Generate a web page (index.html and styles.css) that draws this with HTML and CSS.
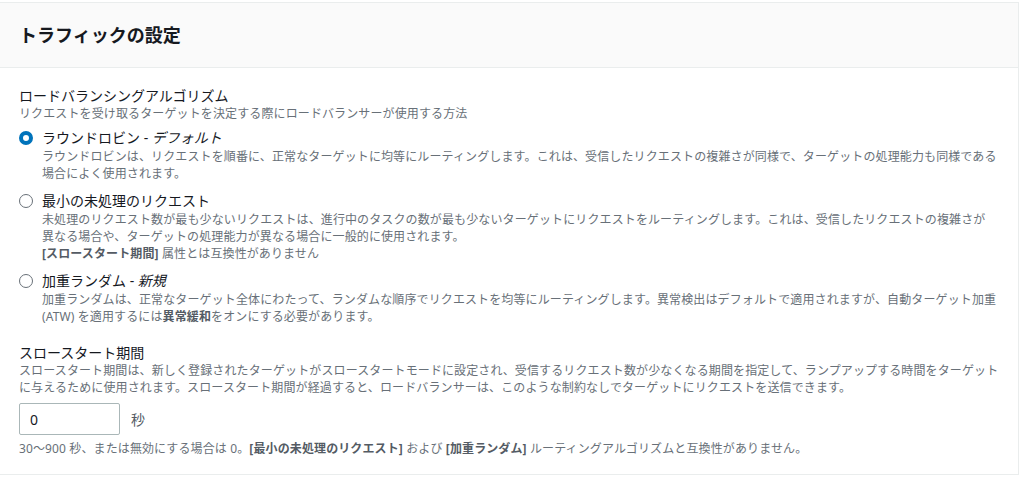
FILE: index.html
```html
<!DOCTYPE html>
<html lang="ja">
<head>
<meta charset="utf-8">
<title>トラフィックの設定</title>
<link rel="stylesheet" href="styles.css">
</head>
<body>
<div class="card">
  <div class="card-header">
    <h2 class="card-title">トラフィックの設定</h2>
  </div>
  <div class="card-body">
    <div class="field">
      <div class="field-label">ロードバランシングアルゴリズム</div>
      <div class="field-desc">リクエストを受け取るターゲットを決定する際にロードバランサーが使用する方法</div>
      <div class="radio-group">
        <div class="radio-option">
          <div class="radio-row">
            <span class="radio checked"></span>
            <span class="radio-label">ラウンドロビン - <em>デフォルト</em></span>
          </div>
          <div class="radio-desc">ラウンドロビンは、リクエストを順番に、正常なターゲットに均等にルーティングします。これは、受信したリクエストの複雑さが同様で、ターゲットの処理能力も同様である<br>場合によく使用されます。</div>
        </div>
        <div class="radio-option">
          <div class="radio-row">
            <span class="radio"></span>
            <span class="radio-label">最小の未処理のリクエスト</span>
          </div>
          <div class="radio-desc">未処理のリクエスト数が最も少ないリクエストは、進行中のタスクの数が最も少ないターゲットにリクエストをルーティングします。これは、受信したリクエストの複雑さが<br>異なる場合や、ターゲットの処理能力が異なる場合に一般的に使用されます。<br><strong>[スロースタート期間]</strong> 属性とは互換性がありません</div>
        </div>
        <div class="radio-option">
          <div class="radio-row">
            <span class="radio"></span>
            <span class="radio-label">加重ランダム - <em>新規</em></span>
          </div>
          <div class="radio-desc">加重ランダムは、正常なターゲット全体にわたって、ランダムな順序でリクエストを均等にルーティングします。異常検出はデフォルトで適用されますが、自動ターゲット加重<br>(ATW) を適用するには<strong>異常緩和</strong>をオンにする必要があります。</div>
        </div>
      </div>
    </div>
    <div class="field field-slow">
      <div class="field-label">スロースタート期間</div>
      <div class="field-desc">スロースタート期間は、新しく登録されたターゲットがスロースタートモードに設定され、受信するリクエスト数が少なくなる期間を指定して、ランプアップする時間をターゲット<br>に与えるために使用されます。スロースタート期間が経過すると、ロードバランサーは、このような制約なしでターゲットにリクエストを送信できます。</div>
      <div class="input-row">
        <div class="text-input">0</div>
        <span class="unit">秒</span>
      </div>
      <div class="field-hint">30〜900 秒、または無効にする場合は 0。<strong>[最小の未処理のリクエスト]</strong> および <strong>[加重ランダム]</strong> ルーティングアルゴリズムと互換性がありません。</div>
    </div>
  </div>
</div>
</body>
</html>
```

FILE: styles.css
```css
* { box-sizing: border-box; }
html, body { margin: 0; padding: 0; background: #ffffff; }
body {
  font-family: "Noto Sans", "Noto Sans CJK JP", sans-serif;
  color: #16191f;
}
.card {
  margin: 2px 0 0 -1px;
  width: 1020px;
  border: 1px solid #eaeded;
  background: #ffffff;
}
.card-header {
  height: 65px;
  background: #fafafa;
  border-bottom: 1px solid #eaeded;
  display: flex;
  align-items: center;
  padding-left: 19px;
}
.card-title {
  margin: 0;
  font-size: 18px;
  font-weight: 700;
  line-height: 22px;
  color: #16191f;
}
.card-body {
  padding: 19px 19px 17px 19px;
}
.field-label {
  font-size: 14px;
  line-height: 18px;
  color: #16191f;
}
.field-desc, .radio-desc, .field-hint {
  font-size: 12px;
  line-height: 17px;
  color: #687078;
  letter-spacing: 0.12px;
  white-space: nowrap;
}
.field-desc strong, .radio-desc strong, .field-hint strong {
  color: #545b64;
  font-weight: 700;
}
.radio-group {
  margin-top: 6px;
  display: flex;
  flex-direction: column;
  gap: 9px;
}
.radio-row {
  display: flex;
  align-items: center;
  height: 20px;
}
.radio {
  width: 14px;
  height: 14px;
  border-radius: 50%;
  border: 1.5px solid #687078;
  background: #fff;
  flex: none;
  margin-right: 9px;
}
.radio.checked {
  border: 4px solid #0073bb;
}
.radio-label {
  font-size: 14px;
  line-height: 20px;
  color: #16191f;
}
.radio-label em { font-style: italic; }
.radio-desc { padding-left: 23px; }
.field-slow { margin-top: 19px; }
.input-row {
  margin-top: 7px;
  display: flex;
  align-items: center;
  gap: 11px;
}
.text-input {
  width: 101px;
  height: 32px;
  border: 1px solid #aab7b8;
  border-radius: 2px;
  padding-left: 10px;
  display: flex;
  align-items: center;
  font-size: 14px;
  color: #16191f;
}
.unit {
  font-size: 14px;
  color: #545b64;
}
.field-hint { margin-top: 5px; }
```
